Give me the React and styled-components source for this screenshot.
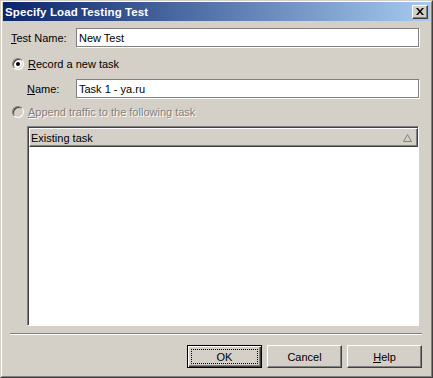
import React from "react";
import styled, { createGlobalStyle, css } from "styled-components";

const Global = createGlobalStyle`
  html, body { margin: 0; padding: 0; background: #d4d0c8; overflow: hidden; }
  #root { width: 433px; height: 378px; }
  * { box-sizing: border-box; }
`;

const Window = styled.div`
  width: 433px;
  height: 378px;
  display: flex;
  flex-direction: column;
  background: #d4d0c8;
  border: 1px solid;
  border-color: #d4d0c8 #404040 #404040 #d4d0c8;
  font-family: "Liberation Sans", Arial, sans-serif;
  font-size: 11px;
  color: #000;
`;

const Frame = styled.div`
  flex: 1;
  display: flex;
  flex-direction: column;
  border: 1px solid;
  border-color: #ffffff #808080 #808080 #ffffff;
  padding: 0 1px 1px 1px;
  min-height: 0;
`;

const TitleBar = styled.div`
  height: 19px;
  display: flex;
  align-items: center;
  justify-content: space-between;
  padding: 0 2px 0 2px;
  background: linear-gradient(to right, #0a246a, #a6caf0);
`;

const Title = styled.span`
  color: #fff;
  font-weight: bold;
  font-size: 11.5px;
  letter-spacing: 0.1px;
`;

const CloseButton = styled.div`
  width: 16px;
  height: 14px;
  background: #d4d0c8;
  border: 1px solid;
  border-color: #ffffff #404040 #404040 #ffffff;
  box-shadow: inset -1px -1px 0 #808080;
  display: flex;
  align-items: center;
  justify-content: center;
  padding-bottom: 1px;
`;

const Client = styled.div`
  flex: 1;
  display: flex;
  flex-direction: column;
  padding: 7px 8px 7px 7px;
  min-height: 0;
`;

const FieldRow = styled.div`
  display: flex;
  align-items: center;
  height: 19px;
  margin-top: ${(p) => p.$mt || 0}px;
  padding-left: ${(p) => p.$indent || 0}px;
  margin-right: 3px;
`;

const Label = styled.label`
  width: ${(p) => p.$w}px;
  flex: none;
  padding-left: 1px;
`;

const TextBox = styled.div`
  flex: 1;
  height: 19px;
  background: #fff;
  border: 1px solid #808080;
  box-shadow: 1px 1px 0 #ffffff;
  display: flex;
  align-items: center;
  padding-left: 2px;
`;

const RadioRow = styled.div`
  display: flex;
  align-items: center;
  height: 12px;
  margin-top: ${(p) => p.$mt}px;
  padding-left: 2px;
  gap: 4px;
  color: ${(p) => (p.$disabled ? "#808080" : "#000")};
  text-shadow: ${(p) => (p.$disabled ? "1px 1px 0 #ffffff" : "none")};
`;

const RadioCircle = styled.span`
  position: relative;
  width: 12px;
  height: 12px;
  flex: none;
  border-radius: 50%;
  border: 1px solid;
  border-color: #808080 #ffffff #ffffff #808080;
  box-shadow: inset 1px 1px 0 #404040, inset -1px -1px 0 #d4d0c8;
  background: ${(p) => (p.$disabled ? "#d4d0c8" : "#fff")};
  ${(p) =>
    p.$checked &&
    css`
      &::after {
        content: "";
        position: absolute;
        left: 3px;
        top: 3px;
        width: 4px;
        height: 4px;
        border-radius: 50%;
        background: #000;
      }
    `}
`;

const ListView = styled.div`
  flex: 1;
  margin: 8px 3px 0 17px;
  display: flex;
  flex-direction: column;
  background: #fff;
  border: 1px solid;
  border-color: #808080 #ffffff #ffffff #808080;
  box-shadow: inset 1px 1px 0 #404040;
  padding: 1px 0 0 1px;
  min-height: 0;
`;

const ListHeader = styled.div`
  height: 19px;
  display: flex;
  align-items: center;
  justify-content: space-between;
  background: #d4d0c8;
  border: 1px solid;
  border-color: #ffffff #404040 #404040 #ffffff;
  box-shadow: inset -1px -1px 0 #808080;
  padding: 0 5px 0 1px;
`;

const Separator = styled.div`
  margin-top: 7px;
  height: 2px;
  border-top: 1px solid #808080;
  border-bottom: 1px solid #ffffff;
`;

const ButtonRow = styled.div`
  margin-top: 10px;
  display: flex;
  justify-content: flex-end;
  gap: 5px;
`;

const Button = styled.div`
  width: 75px;
  height: 23px;
  display: flex;
  align-items: center;
  justify-content: center;
  background: #d4d0c8;
  border: 1px solid;
  border-color: #ffffff #404040 #404040 #ffffff;
  box-shadow: inset -1px -1px 0 #808080;
  ${(p) =>
    p.$default &&
    css`
      position: relative;
      border: 1px solid #000;
      box-shadow: inset 1px 1px 0 #ffffff, inset -1px -1px 0 #404040, inset -2px -2px 0 #808080;
      &::after {
        content: "";
        position: absolute;
        left: 3px;
        top: 3px;
        right: 3px;
        bottom: 3px;
        border: 1px dotted #000;
      }
    `}
`;

const SortArrow = () => (
  <svg width="9" height="8" viewBox="0 0 9 8">
    <polyline points="0.5,7.5 4.5,0.5" fill="none" stroke="#808080" strokeWidth="1" />
    <polyline points="4.5,0.5 8.5,7.5 0.5,7.5" fill="none" stroke="#808080" strokeWidth="1" />
  </svg>
);

const CloseX = () => (
  <svg width="8" height="7" viewBox="0 0 8 7">
    <path d="M0 0h2l2 2.5 2-2.5h2L5 3.5 8 7H6L4 4.5 2 7H0l3-3.5z" fill="#000" />
  </svg>
);

export default function App() {
  return (
    <>
      <Global />
      <Window>
        <Frame>
          <TitleBar>
            <Title>Specify Load Testing Test</Title>
            <CloseButton>
              <CloseX />
            </CloseButton>
          </TitleBar>
          <Client>
            <FieldRow>
              <Label $w={66}>
                <u>T</u>est Name:
              </Label>
              <TextBox>New Test</TextBox>
            </FieldRow>
            <RadioRow $mt={11}>
              <RadioCircle $checked />
              <span>
                <u>R</u>ecord a new task
              </span>
            </RadioRow>
            <FieldRow $mt={9} $indent={16}>
              <Label $w={50}>
                <u>N</u>ame:
              </Label>
              <TextBox>Task 1 - ya.ru</TextBox>
            </FieldRow>
            <RadioRow $mt={8} $disabled>
              <RadioCircle $disabled />
              <span>
                <u>A</u>ppend traffic to the following task
              </span>
            </RadioRow>
            <ListView>
              <ListHeader>
                <span>Existing task</span>
                <SortArrow />
              </ListHeader>
            </ListView>
            <Separator />
            <ButtonRow>
              <Button $default>OK</Button>
              <Button>Cancel</Button>
              <Button>
                <span>
                  <u>H</u>elp
                </span>
              </Button>
            </ButtonRow>
          </Client>
        </Frame>
      </Window>
    </>
  );
}
